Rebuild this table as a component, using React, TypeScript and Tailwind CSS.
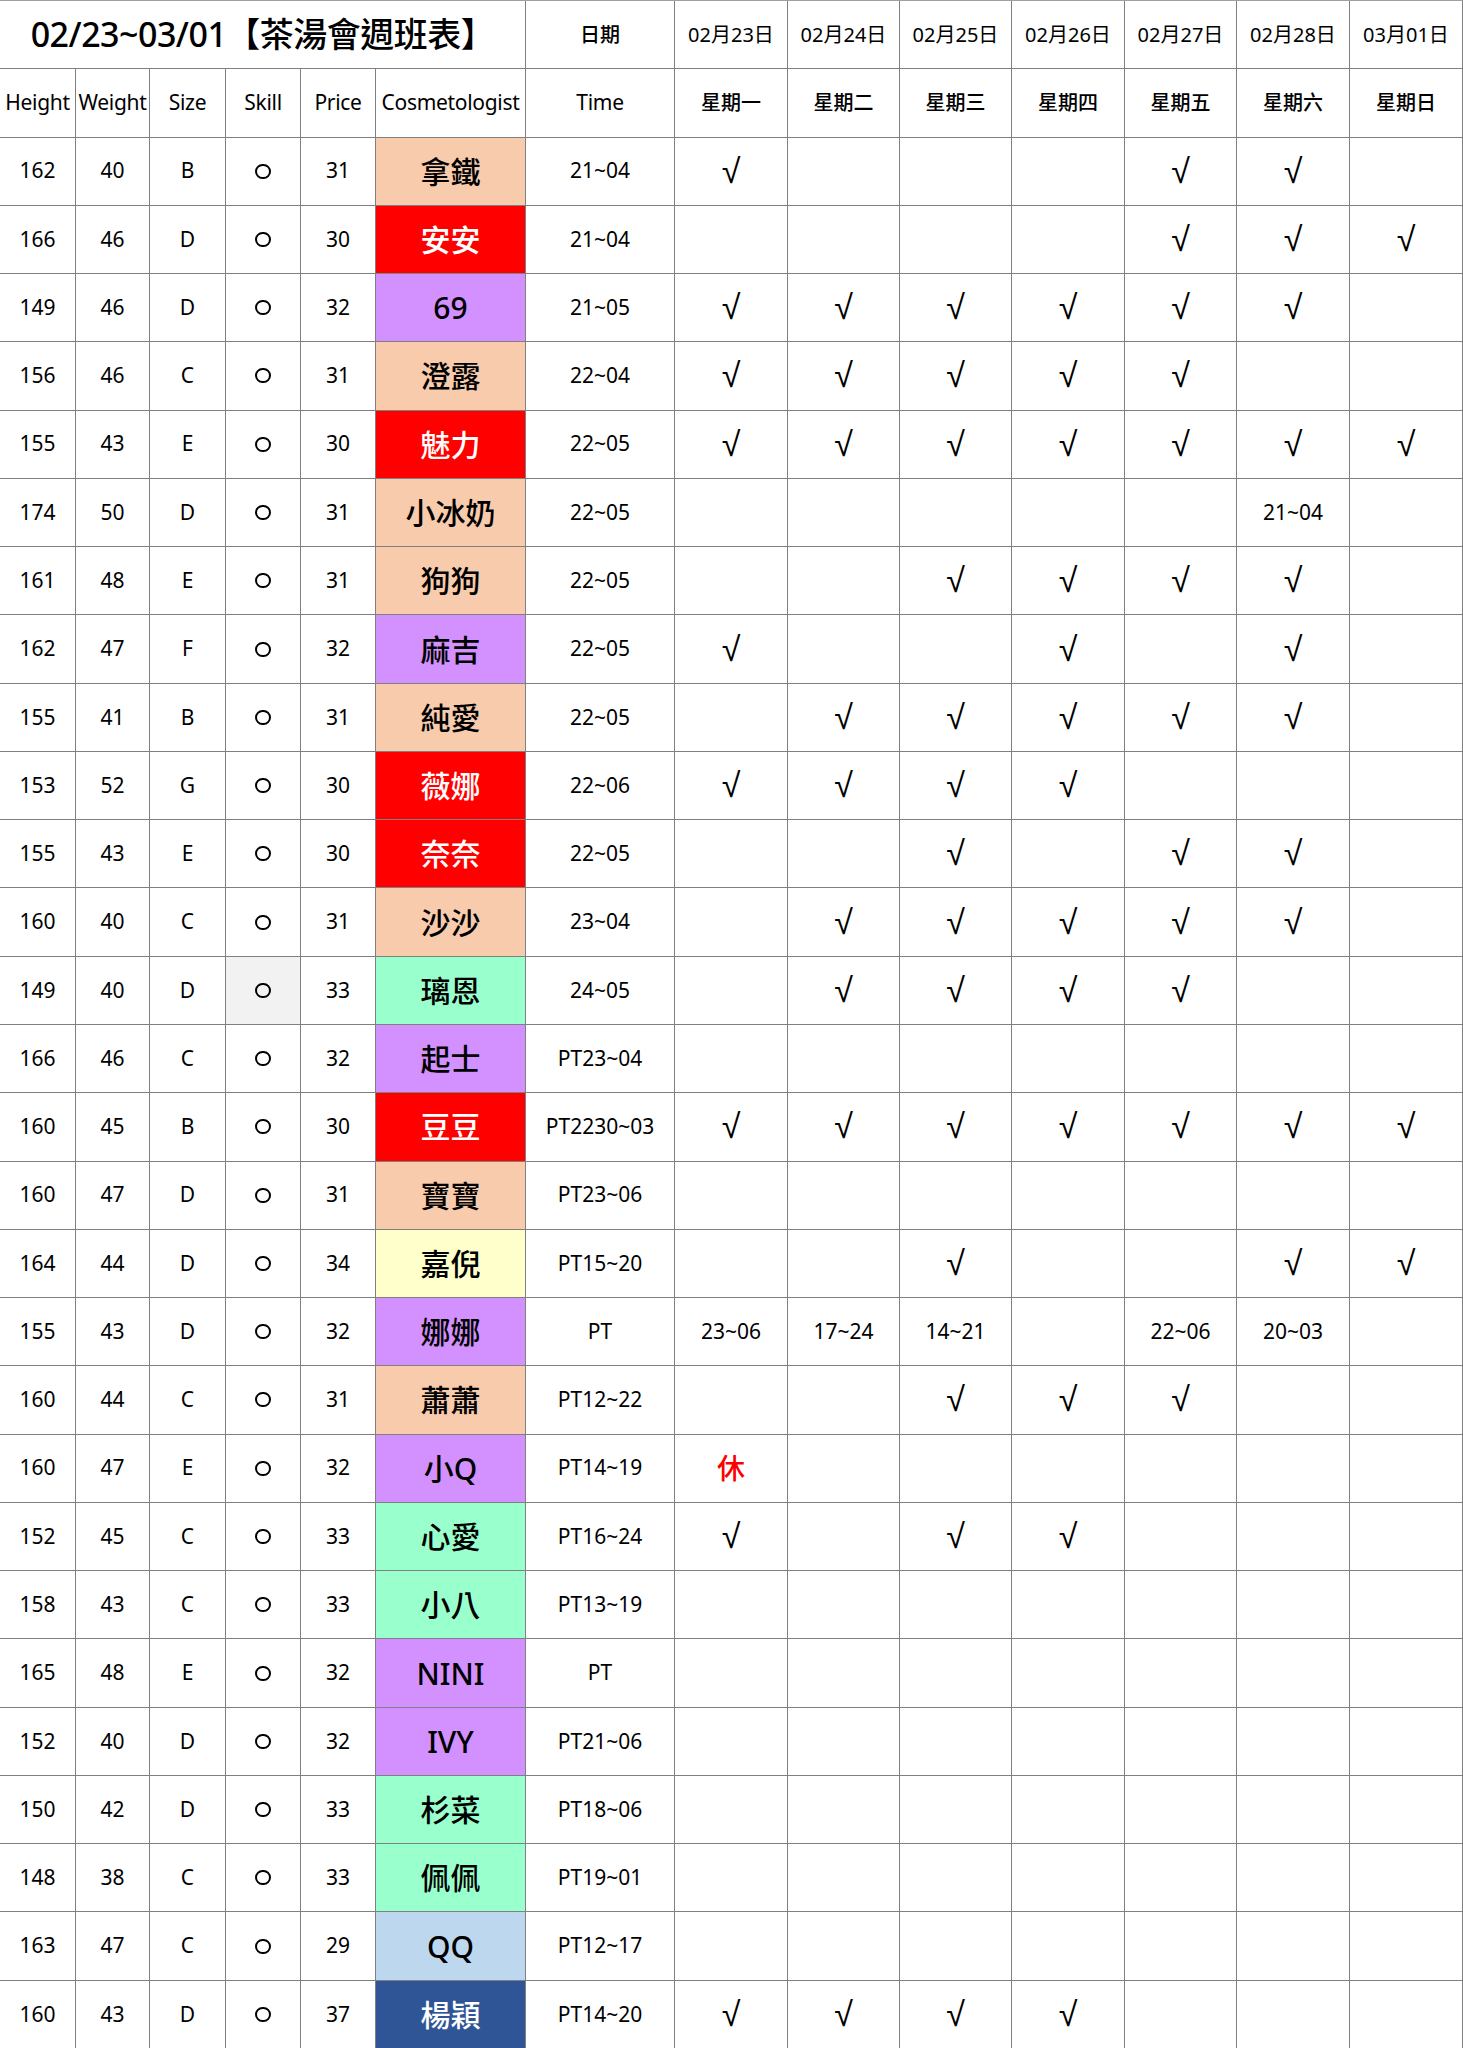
import React from 'react'

type Row = {
    height: number
    weight: number
    size: string
    price: number
    name: string
    color: string
    time: string
    days: string[]
    skillGray?: boolean
}

const peach = 'bg-[#f8cbad] text-black'
const red = 'bg-[#ff0000] text-white'
const purple = 'bg-[#d291ff] text-black'
const mint = 'bg-[#99ffcc] text-black'
const yellow = 'bg-[#ffffcc] text-black'
const sky = 'bg-[#bdd7ee] text-black'
const navy = 'bg-[#2f5597] text-white'

const V = '√'
const none = ['', '', '', '', '', '', '']

const rows: Row[] = [
    { height: 162, weight: 40, size: 'B', price: 31, name: '拿鐵', color: peach, time: '21~04', days: [V, '', '', '', V, V, ''] },
    { height: 166, weight: 46, size: 'D', price: 30, name: '安安', color: red, time: '21~04', days: ['', '', '', '', V, V, V] },
    { height: 149, weight: 46, size: 'D', price: 32, name: '69', color: purple, time: '21~05', days: [V, V, V, V, V, V, ''] },
    { height: 156, weight: 46, size: 'C', price: 31, name: '澄露', color: peach, time: '22~04', days: [V, V, V, V, V, '', ''] },
    { height: 155, weight: 43, size: 'E', price: 30, name: '魅力', color: red, time: '22~05', days: [V, V, V, V, V, V, V] },
    { height: 174, weight: 50, size: 'D', price: 31, name: '小冰奶', color: peach, time: '22~05', days: ['', '', '', '', '', '21~04', ''] },
    { height: 161, weight: 48, size: 'E', price: 31, name: '狗狗', color: peach, time: '22~05', days: ['', '', V, V, V, V, ''] },
    { height: 162, weight: 47, size: 'F', price: 32, name: '麻吉', color: purple, time: '22~05', days: [V, '', '', V, '', V, ''] },
    { height: 155, weight: 41, size: 'B', price: 31, name: '純愛', color: peach, time: '22~05', days: ['', V, V, V, V, V, ''] },
    { height: 153, weight: 52, size: 'G', price: 30, name: '薇娜', color: red, time: '22~06', days: [V, V, V, V, '', '', ''] },
    { height: 155, weight: 43, size: 'E', price: 30, name: '奈奈', color: red, time: '22~05', days: ['', '', V, '', V, V, ''] },
    { height: 160, weight: 40, size: 'C', price: 31, name: '沙沙', color: peach, time: '23~04', days: ['', V, V, V, V, V, ''] },
    { height: 149, weight: 40, size: 'D', price: 33, name: '璃恩', color: mint, time: '24~05', days: ['', V, V, V, V, '', ''], skillGray: true },
    { height: 166, weight: 46, size: 'C', price: 32, name: '起士', color: purple, time: 'PT23~04', days: none },
    { height: 160, weight: 45, size: 'B', price: 30, name: '豆豆', color: red, time: 'PT2230~03', days: [V, V, V, V, V, V, V] },
    { height: 160, weight: 47, size: 'D', price: 31, name: '寶寶', color: peach, time: 'PT23~06', days: none },
    { height: 164, weight: 44, size: 'D', price: 34, name: '嘉倪', color: yellow, time: 'PT15~20', days: ['', '', V, '', '', V, V] },
    { height: 155, weight: 43, size: 'D', price: 32, name: '娜娜', color: purple, time: 'PT', days: ['23~06', '17~24', '14~21', '', '22~06', '20~03', ''] },
    { height: 160, weight: 44, size: 'C', price: 31, name: '蕭蕭', color: peach, time: 'PT12~22', days: ['', '', V, V, V, '', ''] },
    { height: 160, weight: 47, size: 'E', price: 32, name: '小Q', color: purple, time: 'PT14~19', days: ['休', '', '', '', '', '', ''] },
    { height: 152, weight: 45, size: 'C', price: 33, name: '心愛', color: mint, time: 'PT16~24', days: [V, '', V, V, '', '', ''] },
    { height: 158, weight: 43, size: 'C', price: 33, name: '小八', color: mint, time: 'PT13~19', days: none },
    { height: 165, weight: 48, size: 'E', price: 32, name: 'NINI', color: purple, time: 'PT', days: none },
    { height: 152, weight: 40, size: 'D', price: 32, name: 'IVY', color: purple, time: 'PT21~06', days: none },
    { height: 150, weight: 42, size: 'D', price: 33, name: '杉菜', color: mint, time: 'PT18~06', days: none },
    { height: 148, weight: 38, size: 'C', price: 33, name: '佩佩', color: mint, time: 'PT19~01', days: none },
    { height: 163, weight: 47, size: 'C', price: 29, name: 'QQ', color: sky, time: 'PT12~17', days: none },
    { height: 160, weight: 43, size: 'D', price: 37, name: '楊穎', color: navy, time: 'PT14~20', days: [V, V, V, V, '', '', ''] },
]

const dates = ['02月23日', '02月24日', '02月25日', '02月26日', '02月27日', '02月28日', '03月01日']
const weekdays = ['星期一', '星期二', '星期三', '星期四', '星期五', '星期六', '星期日']

const cell = 'h-[68.27px] flex items-center justify-center border-r border-b border-[#808080] text-black'

function DayCell({ value }: { value: string }) {
    if (value === V) return <div className={`${cell} text-[34px] font-['Liberation_Sans',sans-serif]`}>{value}</div>
    if (value === '休') return <div className={`${cell} text-[28px] font-medium !text-[#ff0000]`}>{value}</div>
    return <div className={`${cell} text-[21px]`}>{value}</div>
}

function App() {
    return (
        <div className="w-[1463px] bg-white" style={{ fontFamily: '"Noto Sans", "Noto Sans CJK TC", sans-serif' }}>
            <div className="grid grid-cols-[76px_74px_76px_75px_75px_150px_149px_113px_112px_112px_113px_112px_113px_113px] border-t border-[#a0a0a0]">
                {/* title row */}
                <div className={`${cell} col-span-6 text-[34px] font-medium tracking-[-0.5px]`}>02/23~03/01【茶湯會週班表】</div>
                <div className={`${cell} text-[20px] font-medium`}>日期</div>
                {dates.map(d => <div key={d} className={`${cell} text-[20px]`}>{d}</div>)}

                {/* column header row */}
                {['Height', 'Weight', 'Size', 'Skill', 'Price', 'Cosmetologist', 'Time'].map(h => (
                    <div key={h} className={`${cell} text-[21px] tracking-[-0.3px]`}>{h}</div>
                ))}
                {weekdays.map(w => <div key={w} className={`${cell} text-[20px] font-medium`}>{w}</div>)}

                {rows.map((r, i) => (
                    <React.Fragment key={i}>
                        <div className={`${cell} text-[21px]`}>{r.height}</div>
                        <div className={`${cell} text-[21px]`}>{r.weight}</div>
                        <div className={`${cell} text-[21px]`}>{r.size}</div>
                        <div className={`${cell} ${r.skillGray ? 'bg-[#f2f2f2]' : ''}`}>
                            <span className="w-[16px] h-[15px] rounded-full border-2 border-black" />
                        </div>
                        <div className={`${cell} text-[21px]`}>{r.price}</div>
                        <div className={`h-[68.27px] flex items-center justify-center border-r border-b border-[#808080] text-[30px] font-medium ${r.color}`}>{r.name}</div>
                        <div className={`${cell} text-[21px]`}>{r.time}</div>
                        {r.days.map((d, j) => <DayCell key={j} value={d} />)}
                    </React.Fragment>
                ))}
            </div>
        </div>
    )
}

export default App
